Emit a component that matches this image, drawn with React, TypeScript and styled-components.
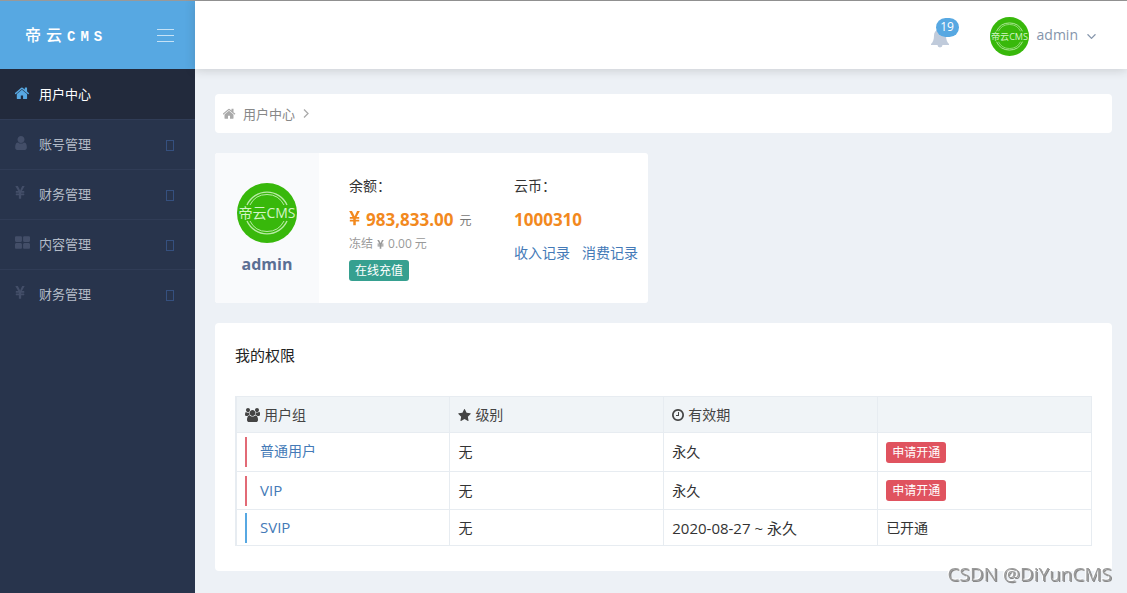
import React from 'react';
import styled, { createGlobalStyle } from 'styled-components';

const GlobalStyle = createGlobalStyle`
  *, *::before, *::after { box-sizing: border-box; }
  body {
    margin: 0;
    background: #edf1f6;
    color: #333;
    font: 14px/20px "Open Sans", "Noto Sans CJK SC", sans-serif;
  }
  a { text-decoration: none; color: #447ab7; }
  button { font: inherit; cursor: pointer; }
  h1, h2, p { margin: 0; }
`;

const ICONS = {
  home: 'M1408 992v480q0 26-19 45t-45 19h-384v-384h-256v384h-384q-26 0-45-19t-19-45v-480q0-1 .5-3t.5-3l575-474 575 474q1 2 1 6zm223-69l-62 74q-8 9-21 11h-3q-13 0-21-7l-692-577-692 577q-12 8-24 7-13-2-21-11l-62-74q-8-10-7-23.5t11-21.5l719-599q32-26 76-26t76 26l244 204v-195q0-14 9-23t23-9h192q14 0 23 9t9 23v408l219 182q10 8 11 21.5t-7 23.5z',
  user: 'M1536 1399q0 109-62.5 187t-150.5 78h-854q-88 0-150.5-78t-62.5-187q0-85 8.5-160.5t31.5-152 58.5-131 94-89 134.5-34.5q131 128 313 128t313-128q76 0 134.5 34.5t94 89 58.5 131 31.5 152 8.5 160.5zm-256-887q0 159-112.5 271.5t-271.5 112.5-271.5-112.5-112.5-271.5 112.5-271.5 271.5-112.5 271.5 112.5 112.5 271.5z',
  yen: 'M985.5 1536h-172q-13 0-22.5-9t-9.5-23v-330h-288q-13 0-22.5-9t-9.5-23v-103q0-13 9.5-22.5t22.5-9.5h288v-85h-288q-13 0-22.5-9t-9.5-23v-104q0-13 9.5-22.5t22.5-9.5h214l-321-578q-8-16 0-32 10-16 28-16h194q19 0 29 18l215 425q19 38 56 125 10-24 30.5-68t27.5-61l191-420q8-19 29-19h191q17 0 27 16 9 14 1 31l-313 579h215q13 0 22.5 9.5t9.5 22.5v104q0 14-9.5 23t-22.5 9h-290v85h290q13 0 22.5 9.5t9.5 22.5v103q0 14-9.5 23t-22.5 9h-290v330q0 13-9.5 22.5t-22.5 9.5z',
  grid: 'M832 1024v384q0 52-38 90t-90 38h-512q-52 0-90-38t-38-90v-384q0-52 38-90t90-38h512q52 0 90 38t38 90zm0-768v384q0 52-38 90t-90 38h-512q-52 0-90-38t-38-90v-384q0-52 38-90t90-38h512q52 0 90 38t38 90zm896 768v384q0 52-38 90t-90 38h-512q-52 0-90-38t-38-90v-384q0-52 38-90t90-38h512q52 0 90 38t38 90zm0-768v384q0 52-38 90t-90 38h-512q-52 0-90-38t-38-90v-384q0-52 38-90t90-38h512q52 0 90 38t38 90z',
  star: 'M1728 647q0 22-26 48l-363 354 86 500q1 7 1 20 0 21-10.5 35.5t-30.5 14.5q-19 0-40-12l-449-236-449 236q-22 12-40 12-21 0-31.5-14.5t-10.5-35.5q0-6 2-20l86-500-364-354q-25-27-25-48 0-37 56-46l502-73 225-455q19-41 49-41t49 41l225 455 502 73q56 9 56 46z',
  clock: 'M1024 544v448q0 14-9 23t-23 9h-320q-14 0-23-9t-9-23v-64q0-14 9-23t23-9h224v-352q0-14 9-23t23-9h64q14 0 23 9t9 23zm416 352q0-148-73-273t-198-198-273-73-273 73-198 198-73 273 73 273 198 198 273 73 273-73 198-198 73-273zm224 0q0 209-103 385.5t-279.5 279.5-385.5 103-385.5-103-279.5-279.5-103-385.5 103-385.5 279.5-279.5 385.5-103 385.5 103 279.5 279.5 103 385.5z',
  group: 'M529 896q-162 5-265 128h-134q-82 0-138-40.5t-56-118.5q0-353 124-353 6 0 43.5 21t97.5 42.5 119 21.5q67 0 133-23-5 37-5 66 0 159 94 290zm1071 637q0 120-73 189.5t-194 69.5h-874q-121 0-194-69.5t-73-189.5q0-53 3.5-103.5t14-109 26.5-108.5 43-97.5 62-81 85.5-53.5 111.5-20q10 0 43 21.5t73 48 107 48 135 21.5 135-21.5 107-48 73-48 43-21.5q61 0 111.5 20t85.5 53.5 62 81 43 97.5 26.5 108.5 14 109 3.5 103.5zm-1024-1277q0 106-75 181t-181 75-181-75-75-181 75-181 181-75 181 75 75 181zm704 384q0 159-112.5 271.5t-271.5 112.5-271.5-112.5-112.5-271.5 112.5-271.5 271.5-112.5 271.5 112.5 112.5 271.5zm576 225q0 78-56 118.5t-138 40.5h-134q-103-123-265-128 94-131 94-290 0-29-5-66 66 23 133 23 59 0 119-21.5t97.5-42.5 43.5-21q124 0 124 353zm-128-609q0 106-75 181t-181 75-181-75-75-181 75-181 181-75 181 75 75 181z',
  down: 'M1395 736q0 13-10 23l-466 466q-10 10-23 10t-23-10l-466-466q-10-10-10-23t10-23l50-50q10-10 23-10t23 10l393 393 393-393q10-10 23-10t23 10l50 50q10 10 10 23z',
};

const BOXES: Record<keyof typeof ICONS, [string, number, number]> = {
  home: ['64 190 1664 1346', 15, 12],
  user: ['256 128 1280 1536', 12, 14],
  yen: ['384 256 1027 1280', 10, 13],
  grid: ['64 128 1664 1408', 15, 13],
  star: ['64 32 1664 1587', 13, 12],
  clock: ['128 128 1536 1536', 12, 12],
  group: ['-64 0 1920 1792', 15, 14],
  down: ['397 653 998 582', 9, 5],
};

const Svg = styled.svg`
  display: block;
  flex: none;
  fill: currentColor;
`;

const Icon = ({ name }: { name: keyof typeof ICONS }) => {
  const [box, w, h] = BOXES[name];
  return (
    <Svg viewBox={box} width={w} height={h} aria-hidden="true">
      <path d={ICONS[name]} />
    </Svg>
  );
};

const Avatar = ({ size }: { size: number }) => (
  <Svg viewBox="0 0 60 60" width={size} height={size} role="img" aria-label="admin">
    <circle cx="30" cy="30" r="30" fill="#38b80b" />
    <g fill="none" stroke="#b9eba6">
      <path d="M10 22a22 22 0 0 1 40 0M10 38a22 22 0 0 0 40 0" strokeWidth="1.4" />
      <path d="M13 22a19 19 0 0 1 34 0M13 38a19 19 0 0 0 34 0" strokeWidth="1" />
    </g>
    <text x="30" y="35" textAnchor="middle" fontSize="14" fontWeight="400" fill="#d3f5c6">帝云CMS</text>
  </Svg>
);

const Page = styled.div`
  display: grid;
  grid-template-columns: 195px 1fr;
  min-height: 100vh;
  border-top: 1px solid #999;
`;

const Sidebar = styled.aside`
  background: #28344c;
`;

const Brand = styled.div`
  display: flex;
  align-items: center;
  justify-content: space-between;
  height: 68px;
  padding: 0 21px 0 25px;
  background: #57a8e2;
`;

const Logo = styled.a`
  padding-top: 3px;
  color: #fff;
  font-size: 16px;
  font-weight: 500;
  letter-spacing: 5px;
  font-family: "Liberation Mono", "Noto Sans CJK SC", monospace;
  span { font-size: 14px; font-weight: 700; }
`;

const Toggle = styled.button`
  display: flex;
  flex-direction: column;
  gap: 5px;
  padding: 0;
  border: 0;
  background: none;
  i { width: 17px; height: 1px; background: #c5e2f6; }
`;

const NavItem = styled.a<{ $active?: boolean }>`
  display: flex;
  align-items: center;
  height: 50px;
  padding: 0 21px 2px 15px;
  font-size: 13px;
  color: ${p => (p.$active ? '#fff' : '#b4bcc8')};
  background: ${p => (p.$active ? '#222a3c' : 'transparent')};
  border-top: 1px solid ${p => (p.$active ? '#222a3c' : '#303c56')};
`;

const NavIcon = styled.span<{ $active?: boolean }>`
  width: 24px;
  padding-bottom: 2px;
  color: ${p => (p.$active ? '#57a8e2' : '#434e68')};
`;

const Arrow = styled.span`
  width: 8px;
  height: 11px;
  margin: 3px 0 0 auto;
  border: 1px solid #35507f;
`;

const Main = styled.div`
  display: flex;
  flex-direction: column;
  min-width: 0;
`;

const Header = styled.header`
  display: flex;
  align-items: center;
  justify-content: flex-end;
  gap: 31px;
  height: 68px;
  padding: 2px 31px 0 0;
  background: #fff;
  box-shadow: 0 1px 10px rgba(50, 50, 50, 0.2);
`;

const BellButton = styled.button`
  position: relative;
  width: 28px;
  height: 36px;
  padding: 9px 0 6px;
  border: 0;
  background: none;
  color: #c0cbdb;
`;

const Badge = styled.span`
  position: absolute;
  top: 0;
  right: 0;
  width: 23px;
  height: 19px;
  border-radius: 10px;
  background: #57a8e2;
  color: #fff;
  font-size: 12px;
  line-height: 18px;
`;

const UserMenu = styled.button`
  display: flex;
  align-items: center;
  gap: 8px;
  padding: 0;
  border: 0;
  background: none;
  color: #8595ab;
  font-size: 14px;
  span { padding: 0 1px 3px 0; }
`;

const Content = styled.main`
  display: flex;
  flex-direction: column;
  align-items: stretch;
  gap: 20px;
  padding: 25px 15px 22px 20px;
`;

const Breadcrumb = styled.nav`
  display: flex;
  align-items: center;
  gap: 7px;
  height: 39px;
  padding: 0 8px;
  border-radius: 4px;
  background: #fff;
  color: #aaa;
  font-size: 13px;
  a { color: #888; }
  svg:first-child { width: 13px; height: 11px; }
`;

const Chevron = styled.svg`
  width: 8px;
  height: 9px;
  fill: none;
  stroke: #aaa;
  stroke-width: 1.3;
`;

const UserCard = styled.section`
  display: grid;
  grid-template-columns: 104px 165px auto;
  align-self: flex-start;
  height: 150px;
  padding-right: 10px;
  border-radius: 3px;
  overflow: hidden;
  background: #fff;
`;

const Profile = styled.div`
  display: flex;
  flex-direction: column;
  align-items: center;
  gap: 11px;
  padding-top: 30px;
  background: #f9fafc;
  color: #5b6f94;
  font-size: 16px;
  font-weight: 700;
`;

const Account = styled.div`
  display: flex;
  flex-direction: column;
  align-items: flex-start;
  padding: 23px 0 0 30px;
  white-space: nowrap;
`;

const Label = styled.p`
  height: 31px;
`;

const Amount = styled.p`
  display: flex;
  align-items: center;
  gap: 6px;
  height: 26px;
  color: #f2891e;
  font-size: 17px;
  font-weight: 700;
  small { padding-top: 2px; color: #777; font-size: 12px; font-weight: 400; }
  svg { width: 11px; height: 15px; margin-bottom: 3px; }
`;

const Frozen = styled.p`
  display: flex;
  align-items: center;
  gap: 4px;
  height: 22px;
  margin-bottom: 5px;
  color: #999;
  font-size: 12px;
  svg { width: 7px; height: 9px; }
`;

const Links = styled.p`
  display: flex;
  gap: 12px;
  padding-top: 10px;
`;

const SmallButton = styled.button<{ $tone: string }>`
  display: block;
  height: 21px;
  padding: 0 6px;
  border: 0;
  border-radius: 3px;
  background: ${p => p.$tone};
  color: #fff;
  font-size: 12px;
  line-height: 21px;
`;

const Panel = styled.section`
  padding: 22px 20px 25px;
  border-radius: 4px;
  background: #fff;
`;

const PanelTitle = styled.h2`
  margin-bottom: 31px;
  font-size: 15px;
  font-weight: 400;
  line-height: 20px;
  color: #222;
`;

const Table = styled.table`
  width: 100%;
  table-layout: fixed;
  border-collapse: collapse;
  th, td {
    padding: 0 8px;
    border: 1px solid #e7ecf1;
    text-align: left;
    font-weight: 400;
  }
  th { height: 36px; background: #f0f4f7; color: #444; }
  tr > :first-child { border-left-width: 2px; }
`;

const HeadLabel = styled.span`
  display: flex;
  align-items: center;
  gap: 4px;
`;

const Row = styled.tr<{ $height: number }>`
  height: ${p => p.$height}px;
`;

const GroupLink = styled.a<{ $tone: string; $size: number }>`
  display: block;
  height: 30px;
  padding-left: 13px;
  border-left: 2px solid ${p => p.$tone};
  font-size: ${p => p.$size}px;
  line-height: 28px;
`;

const Watermark = styled.div`
  position: fixed;
  right: 15px;
  bottom: 7px;
  color: #999;
  font-size: 19px;
  line-height: 24px;
  text-shadow: -1px -1px 0 #fff, 1px 1px 0 #888;
`;

const NAV: { icon: keyof typeof ICONS; text: string; active?: boolean }[] = [
  { icon: 'home', text: '用户中心', active: true },
  { icon: 'user', text: '账号管理' },
  { icon: 'yen', text: '财务管理' },
  { icon: 'grid', text: '内容管理' },
  { icon: 'yen', text: '财务管理' },
];

const ROWS = [
  { name: '普通用户', period: '永久', open: false, size: 14, height: 39 },
  { name: 'VIP', period: '永久', open: false, size: 15, height: 38 },
  { name: 'SVIP', period: '2020-08-27 ~ 永久', open: true, size: 15, height: 36 },
];

const Period = styled.td<{ $dated: boolean }>`
  font-size: ${p => (p.$dated ? 15 : 14)}px;
`;

export default function App() {
  return (
    <>
      <GlobalStyle />
      <Page>
        <Sidebar>
          <Brand>
            <Logo href="#">帝云<span>CMS</span></Logo>
            <Toggle aria-label="菜单"><i /><i /><i /></Toggle>
          </Brand>
          <nav>
            {NAV.map((item, i) => (
              <NavItem key={i} href="#" $active={item.active}>
                <NavIcon $active={item.active}><Icon name={item.icon} /></NavIcon>
                {item.text}
                {!item.active && <Arrow />}
              </NavItem>
            ))}
          </nav>
        </Sidebar>
        <Main>
          <Header>
            <BellButton aria-label="通知">
              <Svg viewBox="0 0 18 20" width="18" height="20">
                <path d="M9 0c1 0 1.600.6 1.600 1.400C13.500 2 15 4.500 15 7.500c0 4 1 6.500 3 8.500v1h-6.500a2.500 2.500 0 0 1-5 0H0v-1c2-2 3-4.500 3-8.500 0-3 1.500-5.500 4.400-6.100C7.400.6 8 0 9 0z" />
              </Svg>
              <Badge>19</Badge>
            </BellButton>
            <UserMenu>
              <Avatar size={39} />
              <span>admin</span>
              <Icon name="down" />
            </UserMenu>
          </Header>
          <Content>
            <Breadcrumb>
              <Icon name="home" />
              <a href="#">用户中心</a>
              <Chevron viewBox="0 0 8 9"><path d="M2 .5l4 4-4 4" /></Chevron>
            </Breadcrumb>
            <UserCard>
              <Profile>
                <Avatar size={60} />
                admin
              </Profile>
              <Account>
                <Label>余额：</Label>
                <Amount><Icon name="yen" />983,833.00<small>元</small></Amount>
                <Frozen>冻结<Icon name="yen" />0.00 元</Frozen>
                <SmallButton $tone="#36a090">在线充值</SmallButton>
              </Account>
              <Account>
                <Label>云币：</Label>
                <Amount>1000310</Amount>
                <Links><a href="#">收入记录</a><a href="#">消费记录</a></Links>
              </Account>
            </UserCard>
            <Panel>
              <PanelTitle>我的权限</PanelTitle>
              <Table>
                <thead>
                  <tr>
                    <th><HeadLabel><Icon name="group" />用户组</HeadLabel></th>
                    <th><HeadLabel><Icon name="star" />级别</HeadLabel></th>
                    <th><HeadLabel><Icon name="clock" />有效期</HeadLabel></th>
                    <th aria-label="操作" />
                  </tr>
                </thead>
                <tbody>
                  {ROWS.map(r => (
                    <Row key={r.name} $height={r.height}>
                      <td>
                        <GroupLink href="#" $tone={r.open ? '#57a8e2' : '#e26a76'} $size={r.size}>{r.name}</GroupLink>
                      </td>
                      <td>无</td>
                      <Period $dated={r.open}>{r.period}</Period>
                      <td>{r.open ? '已开通' : <SmallButton $tone="#e0535f">申请开通</SmallButton>}</td>
                    </Row>
                  ))}
                </tbody>
              </Table>
            </Panel>
          </Content>
        </Main>
      </Page>
      <Watermark>CSDN @DiYunCMS</Watermark>
    </>
  );
}
